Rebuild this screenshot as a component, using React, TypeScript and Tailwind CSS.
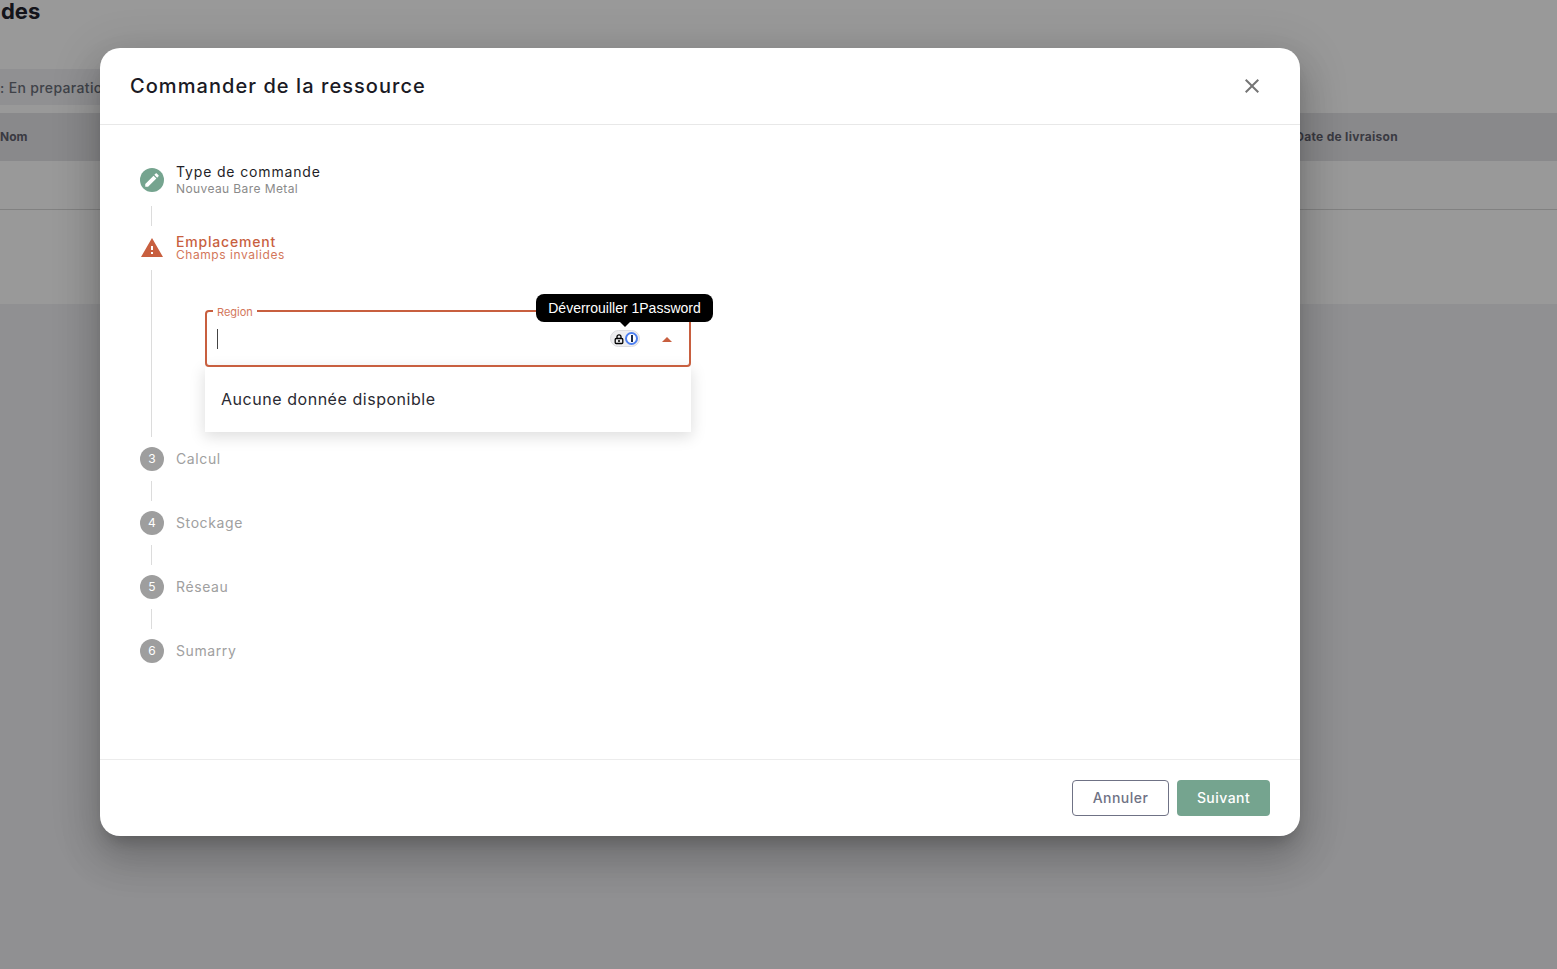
const body = "font-['Inter','Noto_Sans',sans-serif]";

function MdiIcon({ d, className }: { d: string; className?: string }) {
  return (
    <svg viewBox="0 0 24 24" className={className} fill="currentColor">
      <path d={d} />
    </svg>
  );
}

function Line({ h = "h-5" }: { h?: string }) {
  return <div className={`ml-[11px] w-px bg-[#dcdcdc] ${h}`} />;
}

function Step({ n, label }: { n: number; label: string }) {
  return (
    <div className="flex h-11 items-center">
      <div className="flex h-6 w-6 items-center justify-center rounded-full bg-[#9e9e9e] text-xs text-white">{n}</div>
      <span className="-mt-[2px] ml-3 text-[14px] tracking-[0.6px] text-[#a0a0a0]">{label}</span>
    </div>
  );
}

export default function App() {
  return (
    <div className={`relative h-[969px] w-[1557px] overflow-hidden bg-[#f0f0f3] ${body}`}>
      {/* page behind the dialog */}
      <div className="h-[304px] bg-white">
        <div className="h-[69px] pl-px text-[22px] leading-[22px] font-bold text-[#22222c]">des</div>
        <div className="flex h-9 w-[130px] items-center bg-[#f0f0f3] text-[14px] font-medium tracking-[0.35px] whitespace-nowrap text-[#6a6f7a]">
          : En preparation
        </div>
        <div className="mt-2 flex h-12 items-center justify-between bg-[#e4e4e8] pr-[159px] text-xs font-bold text-[#62626e]">
          <span>Nom</span>
          <span className="tracking-[0.3px]">Date de livraison</span>
        </div>
        <div className="h-[49px] border-b border-[#d8d8d8]" />
      </div>
      <div className="absolute inset-0 bg-black/40" />

      {/* dialog */}
      <div className="absolute top-12 left-[100px] flex h-[788px] w-[1200px] flex-col rounded-[20px] bg-white shadow-[0_11px_15px_-7px_rgba(0,0,0,0.2),0_24px_38px_3px_rgba(0,0,0,0.14),0_9px_46px_8px_rgba(0,0,0,0.12)]">
        <div className="flex h-[77px] shrink-0 items-center justify-between border-b border-[#e8e8e8] pr-9 pl-[30px]">
          <h1 className="text-[20px] font-medium tracking-[1.06px] text-[#1a1a24]">Commander de la ressource</h1>
          <MdiIcon
            className="h-6 w-6 text-[#757575]"
            d="M19,6.41L17.59,5L12,10.59L6.41,5L5,6.41L10.59,12L5,17.59L6.41,19L12,13.41L17.59,19L19,17.59L13.41,12L19,6.41Z"
          />
        </div>

        <div className="flex-1 pt-[29px] pl-10">
          <div className="flex h-[52px] items-center">
            <div className="flex h-6 w-6 items-center justify-center rounded-full bg-[#75a48f] text-white">
              <MdiIcon
                className="h-[18px] w-[18px]"
                d="M20.71,7.04C21.1,6.65 21.1,6 20.71,5.63L18.37,3.29C18,2.9 17.35,2.9 16.96,3.29L15.12,5.12L18.87,8.87M3,17.25V21H6.75L17.81,9.93L14.06,6.18L3,17.25Z"
              />
            </div>
            <div className="ml-3 -mt-px">
              <div className="text-[14px] leading-[17px] tracking-[0.85px] text-[#1f1f28]">Type de commande</div>
              <div className="text-xs leading-[17px] tracking-[0.4px] text-[#8a8a8a]">Nouveau Bare Metal</div>
            </div>
          </div>
          <Line />
          <div className="flex h-11 items-center">
            <MdiIcon className="h-6 w-6 text-[#c85f3f]" d="M13,14H11V10H13M13,18H11V16H13M1,21H23L12,2L1,21Z" />
            <div className="ml-3 text-[#c85f3f]">
              <div className="text-[14px] leading-[13px] font-medium tracking-[0.82px]">Emplacement</div>
              <div className="text-xs leading-[13px] tracking-[0.56px] text-[#d3775b]">Champs invalides</div>
            </div>
          </div>

          <div className="flex h-[167px]">
            <Line h="h-full" />
            <div className="relative mt-[40px] ml-[53px] w-[486px]">
              <div className="relative flex h-[57px] items-center rounded border-2 border-[#c85f3f] pr-[10px] pl-[10px]">
                <span className="absolute -top-[7px] left-[6px] bg-white px-1 text-[11px] leading-[14px] text-[#d3775b]">Region</span>
                <div className="h-5 w-px bg-[#444]" />
                <div className="ml-auto flex h-[17px] w-[30px] items-center justify-between rounded-full border border-[#dcdce0] bg-[#eeeef0] px-px">
                  <svg viewBox="0 0 12 12" className="ml-px h-3 w-3 text-black" fill="none" stroke="currentColor" strokeWidth="1.3">
                    <path d="M4 5.5V3.8a2 2 0 0 1 4 0v1.7" />
                    <rect x="2.2" y="5.5" width="7.6" height="5" rx="1" />
                    <path d="M5 8h2" />
                  </svg>
                  <div className="flex h-[13px] w-[13px] items-center justify-center rounded-full border-2 border-[#4d7ff0] bg-white">
                    <div className="h-[7px] w-[2px] bg-[#1a2b4a]" />
                  </div>
                </div>
                <MdiIcon className="ml-[15px] h-6 w-6 text-[#c85f3f]" d="M7,15L12,10L17,15H7Z" />
              </div>

              {/* 1Password tooltip */}
              <div className="absolute -top-4 left-[331px] flex h-7 w-[177px] items-center justify-center rounded-lg bg-black font-['Liberation_Sans',sans-serif] text-[14px] whitespace-nowrap text-white">
                Déverrouiller 1Password
                <div className="absolute -bottom-[5px] left-[84px] h-0 w-0 border-x-[5px] border-t-[5px] border-x-transparent border-t-black" />
              </div>

              {/* dropdown */}
              <div className="flex h-[65px] items-center bg-white pb-[2px] pl-4 text-[16px] tracking-[0.54px] text-[#2a2a32] shadow-[0_4px_14px_1px_rgba(0,0,0,0.13)]">
                Aucune donnée disponible
              </div>
            </div>
          </div>

          <Step n={3} label="Calcul" />
          <Line />
          <Step n={4} label="Stockage" />
          <Line />
          <Step n={5} label="Réseau" />
          <Line />
          <Step n={6} label="Sumarry" />
        </div>

        <div className="flex h-[77px] shrink-0 items-center justify-end gap-2 border-t border-[#ececec] pr-[30px]">
          <button className="h-9 w-[97px] rounded border border-[#6f7285] pb-[2px] text-[14px] font-medium tracking-[0.45px] text-[#6f7285]">Annuler</button>
          <button className="h-9 w-[93px] rounded bg-[#75a48f] pb-[2px] text-[14px] font-medium tracking-[0.45px] text-white">Suivant</button>
        </div>
      </div>
    </div>
  );
}
